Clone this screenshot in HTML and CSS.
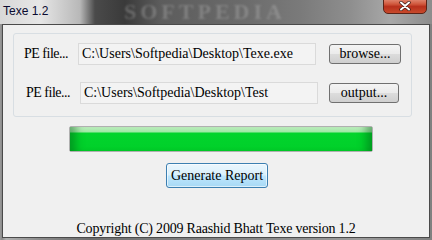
FILE: index.html
```html
<!DOCTYPE html>
<html lang="en">
<head>
    <meta charset="UTF-8">
    <title>Texe 1.2</title>
    <link rel="stylesheet" href="styles.css">
</head>
<body>
    <div class="window">
        <!-- barra de titulo -->
        <div class="titlebar">
            <span class="title">Texe 1.2</span>
            <span class="watermark">SOFTPEDIA</span>
            <div class="close">
                <svg width="14" height="10" viewBox="0 0 14 10">
                    <path d="M3 1.5 L11 8.5 M11 1.5 L3 8.5" stroke="#3a1a14" stroke-width="3.4" stroke-linecap="round"/>
                    <path d="M3 1.5 L11 8.5 M11 1.5 L3 8.5" stroke="#fff" stroke-width="2" stroke-linecap="round"/>
                </svg>
            </div>
        </div>

        <div class="client">
            <div class="group">
                <div class="row">
                    <span class="label">PE file...</span>
                    <div class="field">C:\Users\Softpedia\Desktop\Texe.exe</div>
                    <button class="btn btn-browse">browse...</button>
                </div>
                <div class="row row-2">
                    <span class="label">PE file...</span>
                    <div class="field">C:\Users\Softpedia\Desktop\Test</div>
                    <button class="btn btn-output">output...</button>
                </div>
            </div>

            <div class="progress"><div class="progress-fill"></div></div>

            <button class="btn-report">Generate Report</button>

            <p class="copyright">Copyright (C) 2009 Raashid Bhatt Texe version 1.2</p>
        </div>
    </div>
</body>
</html>
```

FILE: styles.css
```css
body {
    margin: 0;
    width: 432px;
    height: 240px;
    overflow: hidden;
    font-family: "Liberation Serif", "Times New Roman", serif;
}

.window {
    width: 432px;
    height: 240px;
    display: flex;
    flex-direction: column;
    background: linear-gradient(90deg, #9a9a9a 0px, #8a8a8a 2px, #b0b0b0 6px, #8c8c8c 40px, #6d6d6d 90px, #7a7a7a 150px, #8a8a8a 260px, #9c9c9c 360px, #808080 432px);
}

.titlebar {
    position: relative;
    height: 24px;
    flex: none;
    background: linear-gradient(90deg, #d8d8d8 0px, #e6e6e6 40px, #b8b8b8 80px, #4a4a4a 95px, #3a3a3a 125px, #5c5c5c 160px, #6a6a6a 240px, #7a7a7a 300px, #8e8e8e 350px, #a8a8a8 390px, #8c8c8c 432px);
    overflow: hidden;
}

.title {
    position: absolute;
    left: 3px;
    top: 4px;
    font-family: "Liberation Sans", Arial, sans-serif;
    font-size: 12px;
    color: #0a0a30;
}

.watermark {
    position: absolute;
    left: 124px;
    top: 0;
    font-family: "Liberation Serif", serif;
    font-weight: bold;
    font-size: 22px;
    line-height: 24px;
    letter-spacing: 4px;
    color: rgba(200, 200, 200, 0.3);
    filter: blur(1.2px);
}

.close {
    position: absolute;
    left: 383px;
    top: -4px;
    width: 44px;
    height: 18px;
    border: 1px solid #5a2418;
    border-radius: 0 0 5px 5px;
    background: linear-gradient(#e8a08c 0%, #d0573c 45%, #b8301c 60%, #c84a2c 100%);
    display: flex;
    align-items: flex-end;
    justify-content: center;
    padding-bottom: 2px;
    box-sizing: border-box;
}

.client {
    margin: 0 2px 2px 2px;
    flex: 1;
    background: #f0f0f0;
    border: 1px solid #4a4a4a;
    display: flex;
    flex-direction: column;
    align-items: flex-start;
}

.group {
    margin: 8px 0 0 10px;
    width: 399px;
    height: 84px;
    box-sizing: border-box;
    border: 1px solid #d8dee3;
    border-radius: 3px;
    padding: 8px 0 0 10px;
}

.row {
    display: flex;
    align-items: center;
    height: 23px;
}

.row-2 {
    margin-top: 16px;
    padding-left: 2px;
}

.label {
    width: 54px;
    flex: none;
    font-size: 14px;
    letter-spacing: -0.5px;
    color: #000;
}

.field {
    width: 238px;
    height: 22px;
    box-sizing: border-box;
    border: 1px solid #dadada;
    background: #f3f3f3;
    font-size: 14px;
    line-height: 20px;
    padding-left: 3px;
    color: #000;
}

.btn {
    margin-left: 13px;
    height: 20px;
    box-sizing: border-box;
    border: 1px solid #707070;
    border-radius: 3px;
    background: linear-gradient(#f4f4f4 0%, #ebebeb 48%, #dcdcdc 52%, #cfcfcf 100%);
    font-family: "Liberation Serif", serif;
    font-size: 14px;
    padding: 0;
    line-height: 17px;
    color: #000;
}

.btn-browse {
    width: 72px;
}

.row-2 .btn {
    margin-left: 11px;
    width: 70px;
}

.progress {
    margin: 9px 0 0 66px;
    width: 304px;
    height: 26px;
    box-sizing: border-box;
    border: 1px solid #b0b0b0;
    border-radius: 2px;
    background: #e6e6e6;
    padding: 0;
}

.progress-fill {
    height: 100%;
    background: linear-gradient(#c6f4c6 0px, #9ee8a4 5px, #02d42c 6px, #00d02a 100%);
    box-shadow: inset 12px 0 8px -6px rgba(0, 90, 20, 0.45), inset -12px 0 8px -6px rgba(0, 90, 20, 0.45);
}

.btn-report {
    margin: 11px 0 0 163px;
    width: 102px;
    height: 25px;
    box-sizing: border-box;
    border: 1px solid #3c7fb1;
    border-radius: 3px;
    background: linear-gradient(#eaf6fd 0%, #d9f0fc 48%, #bee6fd 52%, #a7d9f5 100%);
    box-shadow: inset 0 0 0 1px rgba(255, 255, 255, 0.6);
    font-family: "Liberation Serif", serif;
    font-size: 14px;
    color: #000;
    padding: 0;
}

.copyright {
    margin: auto 0 0 0;
    width: 100%;
    text-align: center;
    font-size: 14px;
    letter-spacing: -0.2px;
    line-height: 16px;
    padding-bottom: 0;
    color: #000;
}
```
